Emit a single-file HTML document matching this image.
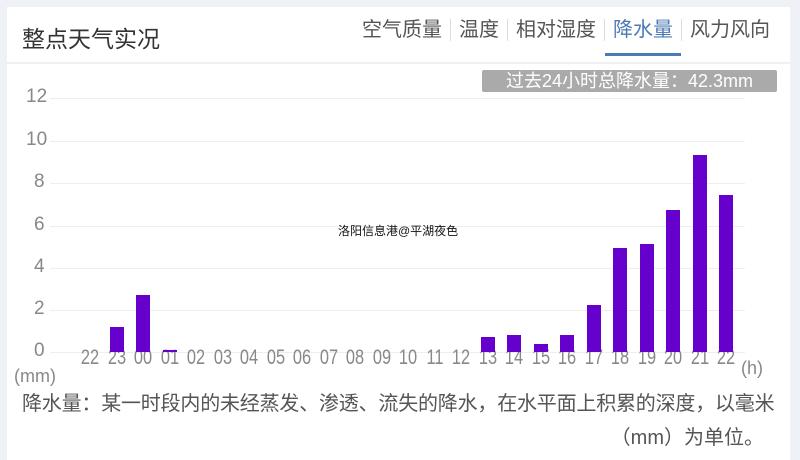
<!DOCTYPE html>
<html><head><meta charset="utf-8"><style>
body{margin:0;width:800px;height:460px;background:#eef2f6;font-family:"Liberation Sans","Noto Sans CJK SC",sans-serif;overflow:hidden;position:relative}
.card{position:absolute;left:7px;top:7px;width:783px;height:453px;background:#fff}
.hd{position:absolute;left:0;top:0;width:783px;height:55px;border-bottom:2px solid #eef0f3}
.t{position:absolute;left:15px;top:13px;font-size:23px;color:#333}
.tabs{position:absolute;right:12px;top:12px;font-size:20px;color:#555;white-space:nowrap}
.tabs span{display:inline-block;padding:0 8px;border-left:1px solid #ddd;line-height:22px}
.tabs span:first-child{border:none}
.tabs .a{color:#4b7ab5;position:relative}
.tabs .a:after{content:"";position:absolute;left:0;right:0;bottom:-15px;height:3px;background:#4b7ab5}
.ab{position:absolute;font-size:16px;color:#888}
.g{position:absolute;left:50px;width:695px;height:1px;background:#eee}
.bar{position:absolute;width:14px;background:#6600cc}
.badge{position:absolute;left:482px;top:70px;width:295px;height:22px;background:#aaa;color:#fff;font-size:18px;line-height:22px;text-align:center;border-radius:2px;white-space:nowrap}
.xl{position:absolute;top:346px;font-size:21px;color:#888;width:30px;text-align:center;transform:scaleX(.78)}
.yl{position:absolute;left:26px;width:24px;text-align:left;font-size:19px;color:#888}
</style></head><body>
<div class="card"><div class="hd"><div class="t">整点天气实况</div>
<div class="tabs"><span>空气质量</span><span>温度</span><span>相对湿度</span><span class="a">降水量</span><span>风力风向</span></div></div></div>
<div class="badge">过去24小时总降水量：42.3mm</div>
<div class="g" style="top:98px"></div><div class="g" style="top:141px"></div><div class="g" style="top:183px"></div><div class="g" style="top:226px"></div><div class="g" style="top:268px"></div><div class="g" style="top:310px"></div><div class="g" style="top:352px"></div>
<div class="yl" style="top:86px">12</div><div class="yl" style="top:129px">10</div><div class="yl" style="top:171px;left:34px">8</div><div class="yl" style="top:214px;left:34px">6</div><div class="yl" style="top:256px;left:34px">4</div><div class="yl" style="top:298px;left:34px">2</div><div class="yl" style="top:340px;left:34px">0</div>
<div class="ab" style="left:14px;top:366px;font-size:18px">(mm)</div>
<div class="ab" style="left:741px;top:358px;font-size:18px">(h)</div>
<div id="x"></div>
<div style="position:absolute;left:338px;top:222px;font-size:12px;color:#111">洛阳信息港@平湖夜色</div>
<div style="position:absolute;left:22px;top:387px;font-size:20px;letter-spacing:-0.2px;color:#555;white-space:nowrap">降水量：某一时段内的未经蒸发、渗透、流失的降水，在水平面上积累的深度，以毫米</div>
<div style="position:absolute;right:36px;top:421px;font-size:20px;color:#555">（mm）为单位。</div>
<script>
var L=["22","23","00","01","02","03","04","05","06","07","08","09","10","11","12","13","14","15","16","17","18","19","20","21","22"];
var V=[0,1.2,2.7,0.1,0,0,0,0,0,0,0,0,0,0,0,0.7,0.8,0.4,0.8,2.2,4.9,5.1,6.7,9.3,7.4];
var h="";for(var i=0;i<25;i++){var c=90+i*26.5;h+='<div class="xl" style="left:'+(c-15)+'px">'+L[i]+'</div>';
if(V[i]>0){var hh=V[i]*21.2;h+='<div class="bar" style="left:'+(c-7)+'px;top:'+(352-hh)+'px;height:'+hh+'px"></div>';}}
document.getElementById("x").innerHTML=h;
</script>
</body></html>
